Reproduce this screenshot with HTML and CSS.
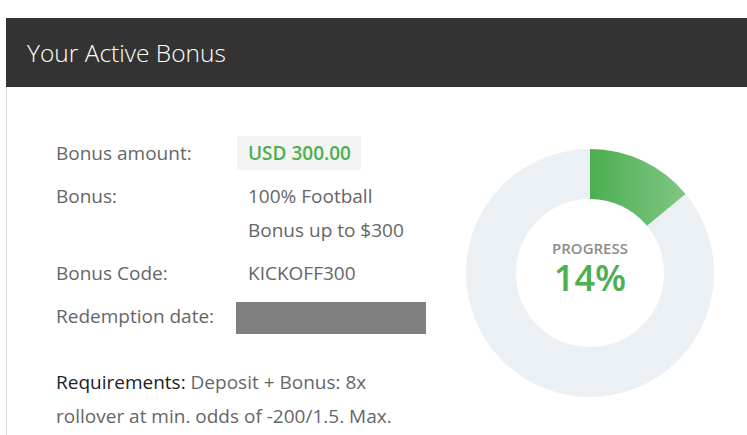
FILE: index.html
```html
<!DOCTYPE html>
<html lang="en">
<head>
<meta charset="utf-8">
<title>Your Active Bonus</title>
<link rel="stylesheet" href="styles.css">
</head>
<body>
<section class="card">
  <header class="card-header">
    <h1 class="card-title">Your Active Bonus</h1>
  </header>
  <div class="card-body">
    <div class="details">
      <div class="rows">
        <div class="label">Bonus amount:</div>
        <div class="value"><span class="amount">USD 300.00</span></div>
        <div class="label">Bonus:</div>
        <div class="value text">100% Football<br>Bonus up to $300</div>
        <div class="label">Bonus Code:</div>
        <div class="value text">KICKOFF300</div>
        <div class="label">Redemption date:</div>
        <div class="value"><span class="redacted"></span></div>
      </div>
      <p class="requirements"><span class="req-label">Requirements:</span> Deposit + Bonus: 8x rollover at min. odds of -200/1.5. Max.</p>
    </div>
    <div class="donut">
      <svg class="donut-svg" width="248" height="248" viewBox="0 0 248 248">
        <defs>
          <linearGradient id="g" x1="124" y1="0" x2="220" y2="0" gradientUnits="userSpaceOnUse">
            <stop offset="0" stop-color="#4cae50"/>
            <stop offset="1" stop-color="#80c783"/>
          </linearGradient>
        </defs>
        <circle cx="124" cy="124" r="99" fill="none" stroke="#ebf0f5" stroke-width="50"/>
        <path d="M124 0 A124 124 0 0 1 219.5 44.96 L181.0 76.83 A74 74 0 0 0 124 50 Z" fill="url(#g)"/>
      </svg>
      <div class="donut-center">
        <div class="donut-label">PROGRESS</div>
        <div class="donut-value">14%</div>
      </div>
    </div>
  </div>
</section>
</body>
</html>
```
FILE: styles.css
```css
html, body {
  margin: 0;
  padding: 0;
  background: #fff;
  overflow: hidden;
}
body {
  font-family: "Open Sans", "Liberation Sans", sans-serif;
  color: #666;
}
.card {
  margin: 18px 0 0 6px;
  border-left: 1px solid #dcdcdc;
  height: 417px;
}
.card-header {
  background: #333;
  height: 69px;
  display: flex;
  align-items: center;
  padding-left: 21px;
  margin-left: -1px;
}
.card-title {
  margin: 0;
  font-size: 24.5px;
  font-weight: 300;
  color: #fff;
  line-height: 1;
  padding-top: 2px;
}
.card-body {
  display: flex;
  padding: 49px 0 0 49px;
}
.details {
  width: 410px;
}
.rows {
  display: grid;
  grid-template-columns: 181px 1fr;
  row-gap: 9px;
  font-size: 19px;
  line-height: 34px;
}
.label {
  color: #666;
}
.value.text {
  padding-left: 11px;
  color: #666;
}
.amount {
  display: inline-block;
  background: #f4f4f4;
  color: #4caf50;
  font-weight: 600;
  padding: 0 10px 0 11px;
  height: 34px;
}
.redacted {
  display: block;
  width: 190px;
  height: 32px;
  margin: 3px 0 0 -1px;
  background: #808080;
}
.requirements {
  margin: 31px 0 0;
  font-size: 19px;
  line-height: 34px;
  color: #666;
  width: 360px;
}
.req-label {
  color: #222;
}
.donut {
  display: grid;
  width: 248px;
  height: 248px;
  margin-top: 13px;
}
.donut-svg, .donut-center {
  grid-area: 1 / 1;
}
.donut-center {
  display: flex;
  flex-direction: column;
  align-items: center;
  justify-content: center;
  padding-bottom: 12px;
}
.donut-label {
  font-size: 15px;
  font-weight: 600;
  color: #8c8c8c;
  line-height: 20px;
  margin-bottom: 2px;
}
.donut-value {
  font-size: 36px;
  font-weight: 600;
  color: #4caf50;
  line-height: 36px;
}
```
